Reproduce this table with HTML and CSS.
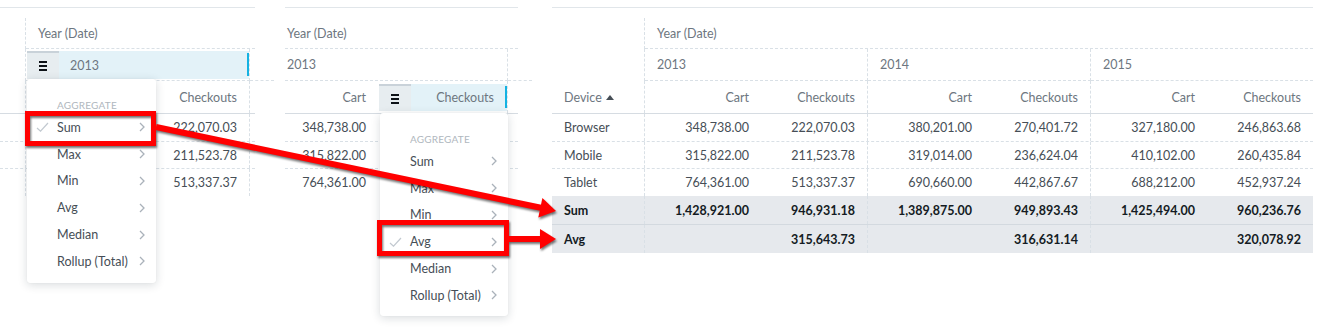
FILE: index.html
```html
<!DOCTYPE html>
<html>
<head>
<meta charset="utf-8">
<link rel="stylesheet" href="styles.css">
</head>
<body>
<div class="canvas">

  <section class="panel p1">
    <div class="row ra"><div class="cell w26 vr"></div><div class="cell grow bd hd">Year (Date)</div></div>
    <div class="row rb">
      <div class="cell w26 vr"></div>
      <div class="cell w224 vr bd selcell">
        <div class="sel s1">
          <span class="handle"><svg width="8" height="10" viewBox="0 0 8 10"><rect y="0" width="8" height="2"/><rect y="4" width="8" height="2"/><rect y="8" width="8" height="2"/></svg></span>
          <span class="selbody left hd">2013</span>
          <span class="selbar"></span>
        </div>
      </div>
      <div class="cell grow bd"></div>
    </div>
    <div class="row rc bs"><div class="cell w26 vr"></div><div class="cell w116 num hd"></div><div class="cell w108 num hd vr">Checkouts</div><div class="cell grow"></div></div>
    <div class="row r1 bd"><div class="cell w26 vr"></div><div class="cell w116 num"></div><div class="cell w108 num vr">222,070.03</div><div class="cell grow"></div></div>
    <div class="row r2 bd"><div class="cell w26 vr"></div><div class="cell w116 num"></div><div class="cell w108 num vr">211,523.78</div><div class="cell grow"></div></div>
    <div class="row r3"><div class="cell w26 vr"></div><div class="cell w116 num"></div><div class="cell w108 num vr">513,337.37</div><div class="cell grow"></div></div>

    <div class="menu m1">
      <div class="m-label">AGGREGATE</div>
      <div class="m-item"><span class="m-check"><svg width="13" height="10" viewBox="0 0 13 10"><polyline points="1,6 4.5,9.2 12,1"/></svg></span><span class="m-text">Sum</span><svg class="chev" width="6" height="10" viewBox="0 0 6 10"><polyline points="1,1 5,5 1,9"/></svg></div>
      <div class="m-item"><span class="m-check"></span><span class="m-text">Max</span><svg class="chev" width="6" height="10" viewBox="0 0 6 10"><polyline points="1,1 5,5 1,9"/></svg></div>
      <div class="m-item"><span class="m-check"></span><span class="m-text">Min</span><svg class="chev" width="6" height="10" viewBox="0 0 6 10"><polyline points="1,1 5,5 1,9"/></svg></div>
      <div class="m-item"><span class="m-check"></span><span class="m-text">Avg</span><svg class="chev" width="6" height="10" viewBox="0 0 6 10"><polyline points="1,1 5,5 1,9"/></svg></div>
      <div class="m-item"><span class="m-check"></span><span class="m-text">Median</span><svg class="chev" width="6" height="10" viewBox="0 0 6 10"><polyline points="1,1 5,5 1,9"/></svg></div>
      <div class="m-item"><span class="m-check"></span><span class="m-text">Rollup (Total)</span><svg class="chev" width="6" height="10" viewBox="0 0 6 10"><polyline points="1,1 5,5 1,9"/></svg></div>
    </div>
  </section>

  <section class="panel p2">
    <div class="row ra"><div class="cell grow bd hd pl2">Year (Date)</div></div>
    <div class="row rb"><div class="cell w223 vr bd hd pl2">2013</div><div class="cell grow bd"></div></div>
    <div class="row rc bs">
      <div class="cell w93 num hd">Cart</div>
      <div class="cell w130 vr selcell">
        <div class="sel s2">
          <span class="handle"><svg width="8" height="10" viewBox="0 0 8 10"><rect y="0" width="8" height="2"/><rect y="4" width="8" height="2"/><rect y="8" width="8" height="2"/></svg></span>
          <span class="selbody right hd">Checkouts</span>
          <span class="selbar"></span>
        </div>
      </div>
      <div class="cell grow"></div>
    </div>
    <div class="row r1 bd"><div class="cell w93 num">348,738.00</div><div class="cell w130 num vr"></div><div class="cell grow"></div></div>
    <div class="row r2 bd"><div class="cell w93 num">315,822.00</div><div class="cell w130 num vr"></div><div class="cell grow"></div></div>
    <div class="row r3"><div class="cell w93 num">764,361.00</div><div class="cell w130 num vr"></div><div class="cell grow"></div></div>

    <div class="menu m2">
      <div class="m-label">AGGREGATE</div>
      <div class="m-item"><span class="m-check"></span><span class="m-text">Sum</span><svg class="chev" width="6" height="10" viewBox="0 0 6 10"><polyline points="1,1 5,5 1,9"/></svg></div>
      <div class="m-item"><span class="m-check"></span><span class="m-text">Max</span><svg class="chev" width="6" height="10" viewBox="0 0 6 10"><polyline points="1,1 5,5 1,9"/></svg></div>
      <div class="m-item"><span class="m-check"></span><span class="m-text">Min</span><svg class="chev" width="6" height="10" viewBox="0 0 6 10"><polyline points="1,1 5,5 1,9"/></svg></div>
      <div class="m-item"><span class="m-check"><svg width="13" height="10" viewBox="0 0 13 10"><polyline points="1,6 4.5,9.2 12,1"/></svg></span><span class="m-text">Avg</span><svg class="chev" width="6" height="10" viewBox="0 0 6 10"><polyline points="1,1 5,5 1,9"/></svg></div>
      <div class="m-item"><span class="m-check"></span><span class="m-text">Median</span><svg class="chev" width="6" height="10" viewBox="0 0 6 10"><polyline points="1,1 5,5 1,9"/></svg></div>
      <div class="m-item"><span class="m-check"></span><span class="m-text">Rollup (Total)</span><svg class="chev" width="6" height="10" viewBox="0 0 6 10"><polyline points="1,1 5,5 1,9"/></svg></div>
    </div>
  </section>

  <section class="panel p3">
    <div class="row ra"><div class="cell w93 vr"></div><div class="cell grow bd hd">Year (Date)</div></div>
    <div class="row rb">
      <div class="cell w93 vr"></div>
      <div class="cell w223 vr bd hd">2013</div>
      <div class="cell w223 vr bd hd">2014</div>
      <div class="cell grow bd hd">2015</div>
    </div>
    <div class="row rc bs">
      <div class="cell w93 vr hd">Device<svg class="sort" width="8" height="5" viewBox="0 0 8 5"><polygon points="0,5 4,0 8,5"/></svg></div>
      <div class="cell w116 num hd">Cart</div><div class="cell w107 num hd vr">Checkouts</div>
      <div class="cell w116 num hd">Cart</div><div class="cell w107 num hd vr">Checkouts</div>
      <div class="cell w116 num hd">Cart</div><div class="cell grow num hd">Checkouts</div>
    </div>
    <div class="row r1 bd">
      <div class="cell w93 vr">Browser</div>
      <div class="cell w116 num">348,738.00</div><div class="cell w107 num vr">222,070.03</div>
      <div class="cell w116 num">380,201.00</div><div class="cell w107 num vr">270,401.72</div>
      <div class="cell w116 num">327,180.00</div><div class="cell grow num">246,863.68</div>
    </div>
    <div class="row r2 bd">
      <div class="cell w93 vr">Mobile</div>
      <div class="cell w116 num">315,822.00</div><div class="cell w107 num vr">211,523.78</div>
      <div class="cell w116 num">319,014.00</div><div class="cell w107 num vr">236,624.04</div>
      <div class="cell w116 num">410,102.00</div><div class="cell grow num">260,435.84</div>
    </div>
    <div class="row r3">
      <div class="cell w93 vr">Tablet</div>
      <div class="cell w116 num">764,361.00</div><div class="cell w107 num vr">513,337.37</div>
      <div class="cell w116 num">690,660.00</div><div class="cell w107 num vr">442,867.67</div>
      <div class="cell w116 num">688,212.00</div><div class="cell grow num">452,937.24</div>
    </div>
    <div class="row rs total bt">
      <div class="cell w93 vr">Sum</div>
      <div class="cell w116 num">1,428,921.00</div><div class="cell w107 num vr">946,931.18</div>
      <div class="cell w116 num">1,389,875.00</div><div class="cell w107 num vr">949,893.43</div>
      <div class="cell w116 num">1,425,494.00</div><div class="cell grow num">960,236.76</div>
    </div>
    <div class="row rv total">
      <div class="cell w93 vr">Avg</div>
      <div class="cell w116 num"></div><div class="cell w107 num vr">315,643.73</div>
      <div class="cell w116 num"></div><div class="cell w107 num vr">316,631.14</div>
      <div class="cell w116 num"></div><div class="cell grow num">320,078.92</div>
    </div>
  </section>

  <svg class="annot" width="1321" height="332" viewBox="0 0 1321 332">
    <g class="shadow">
      <rect x="27.5" y="113.5" width="126" height="30" class="box"/>
      <rect x="379.5" y="222.5" width="127" height="31" class="box"/>
      <line x1="156" y1="127" x2="542" y2="208" class="shaft"/>
      <polygon points="556,211 538.3,217.5 542.4,197.9" class="head"/>
      <line x1="509" y1="239" x2="542" y2="239" class="shaft"/>
      <polygon points="556,239 540,229 540,249" class="head"/>
    </g>
  </svg>
</div>
</body>
</html>
```

FILE: styles.css
```css
* { box-sizing: border-box; margin: 0; padding: 0; }

body {
  width: 1321px;
  height: 332px;
  overflow: hidden;
  background: #ffffff;
  font-family: Lato, "Open Sans", "Liberation Sans", sans-serif;
  font-size: 12.5px;
  color: #464e56;
}

.canvas {
  position: relative;
  display: flex;
  align-items: flex-start;
  width: 1321px;
  height: 332px;
  padding-top: 7px;
}

.panel {
  position: relative;
  border-top: 1px solid #e1e6ea;
  padding-top: 10px;
  flex: none;
}
.p1 { width: 255px; }
.p2 { width: 233px; margin-left: 30px; }
.p3 { width: 761px; margin-left: 34px; }

.row { display: flex; }
.ra { height: 31px; }
.rb { height: 32px; }
.rc { height: 33px; }
.r1 { height: 28px; }
.r2, .r3 { height: 27px; }
.rs { height: 29px; }
.rv { height: 28px; }

.cell {
  display: flex;
  align-items: center;
  padding: 0 12px;
  white-space: nowrap;
  flex: none;
}
.grow { flex: 1; }
.num { justify-content: flex-end; }
.pl2 { padding-left: 2px; }

.w26 { width: 26px; }
.w93 { width: 93px; }
.w107 { width: 107px; }
.w108 { width: 108px; }
.w116 { width: 116px; }
.w130 { width: 130px; }
.w223 { width: 223px; }
.w224 { width: 224px; }

.hd { color: #6d7680; }

.bd { border-bottom: 1px dashed #d9e0e6; }
.bs { border-bottom: 1px solid #d6dce2; }
.vr { border-right: 1px dashed #d9e0e6; }

.total {
  background: #e6e9ed;
  font-weight: 700;
  color: #141b23;
}
.bt { border-bottom: 1px solid #d3d9df; }

.sort { margin-left: 4px; fill: #464e56; }

/* selected header cell */
.selcell { padding: 0; align-items: stretch; }
.sel { flex: 1; display: flex; }
.s1 { margin: 2px 0 1px 1px; }
.s2 { margin: 3px 0 2px 1px; }
.handle {
  width: 32px;
  flex: none;
  display: flex;
  align-items: center;
  justify-content: center;
  background: #e7edf0;
  border-top: 2px solid #c9d2d9;
}
.handle svg { fill: #0d1217; }
.selbody {
  flex: 1;
  display: flex;
  align-items: center;
  background: #e3f2f8;
}
.selbody.left { padding-left: 11px; }
.selbody.right { justify-content: flex-end; padding-right: 11px; }
.selbar {
  width: 2px;
  flex: none;
  border-top: 2px solid #e3f2f8;
  border-bottom: 3px solid #e3f2f8;
  background-clip: padding-box;
  background-color: #14b2e2;
}

/* dropdown menus */
.menu {
  position: absolute;
  background: #ffffff;
  border-radius: 3px;
  box-shadow: 0 2px 10px rgba(20, 35, 50, 0.16), 0 0 1px rgba(20, 35, 50, 0.1);
  padding: 17px 0 7px;
  z-index: 2;
}
.m1 { left: 27px; top: 71px; width: 129px; height: 204px; }
.m2 { left: 95px; top: 105px; width: 128px; height: 203px; }

.m-label {
  height: 18px;
  line-height: 18px;
  padding-left: 30px;
  font-size: 10px;
  color: #b0b7be;
  letter-spacing: 0.2px;
}
.m-item {
  height: 26.8px;
  display: flex;
  align-items: center;
  padding-right: 11px;
  color: #464e56;
}
.m-check {
  width: 30px;
  flex: none;
  display: flex;
  justify-content: center;
  align-items: center;
}
.m-check svg polyline { fill: none; stroke: #c2c9d0; stroke-width: 1.2; }
.m-text { flex: 1; }
.chev polyline { fill: none; stroke: #aab2ba; stroke-width: 1.3; }

/* annotation overlay */
.annot {
  position: absolute;
  left: 0;
  top: 0;
  pointer-events: none;
  z-index: 5;
}
.shadow { filter: drop-shadow(1px 2px 1px rgba(0, 0, 0, 0.55)); }
.box { fill: none; stroke: #ff0000; stroke-width: 5; }
.shaft { stroke: #ff0000; stroke-width: 6; }
.head { fill: #ff0000; }
```
